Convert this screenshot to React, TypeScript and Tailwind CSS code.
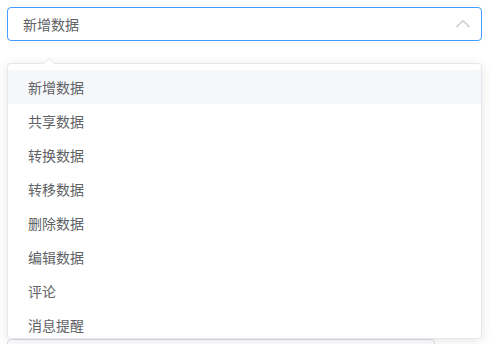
const options = ["新增数据", "共享数据", "转换数据", "转移数据", "删除数据", "编辑数据", "评论", "消息提醒"];

export default function App() {
  return (
    <div
      className="bg-white w-[491px] h-[344px] overflow-hidden px-[7px] pt-[7px] text-[14px] text-[#606266]"
      style={{ fontFamily: '"Noto Sans CJK SC", "Noto Sans", sans-serif' }}
    >
      {/* 选择框 */}
      <div className="w-[475px] h-[34px] flex items-center justify-between border border-[#409eff] rounded-[4px] pl-[15px] pr-[10px]">
        <span className="leading-none">新增数据</span>
        <svg width="14" height="8" viewBox="0 0 14 8" fill="none" className="mr-[1px]">
          <polyline points="0.5,7 7,0.8 13.5,7" stroke="#c0c4cc" strokeWidth="1.1" />
        </svg>
      </div>

      {/* 下拉菜单 */}
      <div className="relative mt-[22px] w-[475px] bg-white border border-[#e4e7ed] rounded-[4px] shadow-[0_2px_12px_0_rgba(0,0,0,0.1)]">
        <div className="absolute -top-[6px] left-[35px] w-0 h-0 border-x-[6px] border-x-transparent border-b-[6px] border-b-[#e4e7ed]">
          <div className="absolute top-[1px] -left-[6px] w-0 h-0 border-x-[6px] border-x-transparent border-b-[6px] border-b-white" />
        </div>
        <div className="max-h-[274px] overflow-hidden">
          <ul className="py-[6px]">
            {options.map((o, i) => (
              <li
                key={o}
                className={`h-[34px] leading-[34px] px-[20px] ${i === 0 ? "bg-[#f5f7fa]" : ""}`}
              >
                {o}
              </li>
            ))}
          </ul>
        </div>
      </div>

      {/* 下方被遮住的输入框 */}
      <div className="w-[428px] h-[34px] border border-[#dcdfe6] rounded-[4px]" />
    </div>
  );
}
